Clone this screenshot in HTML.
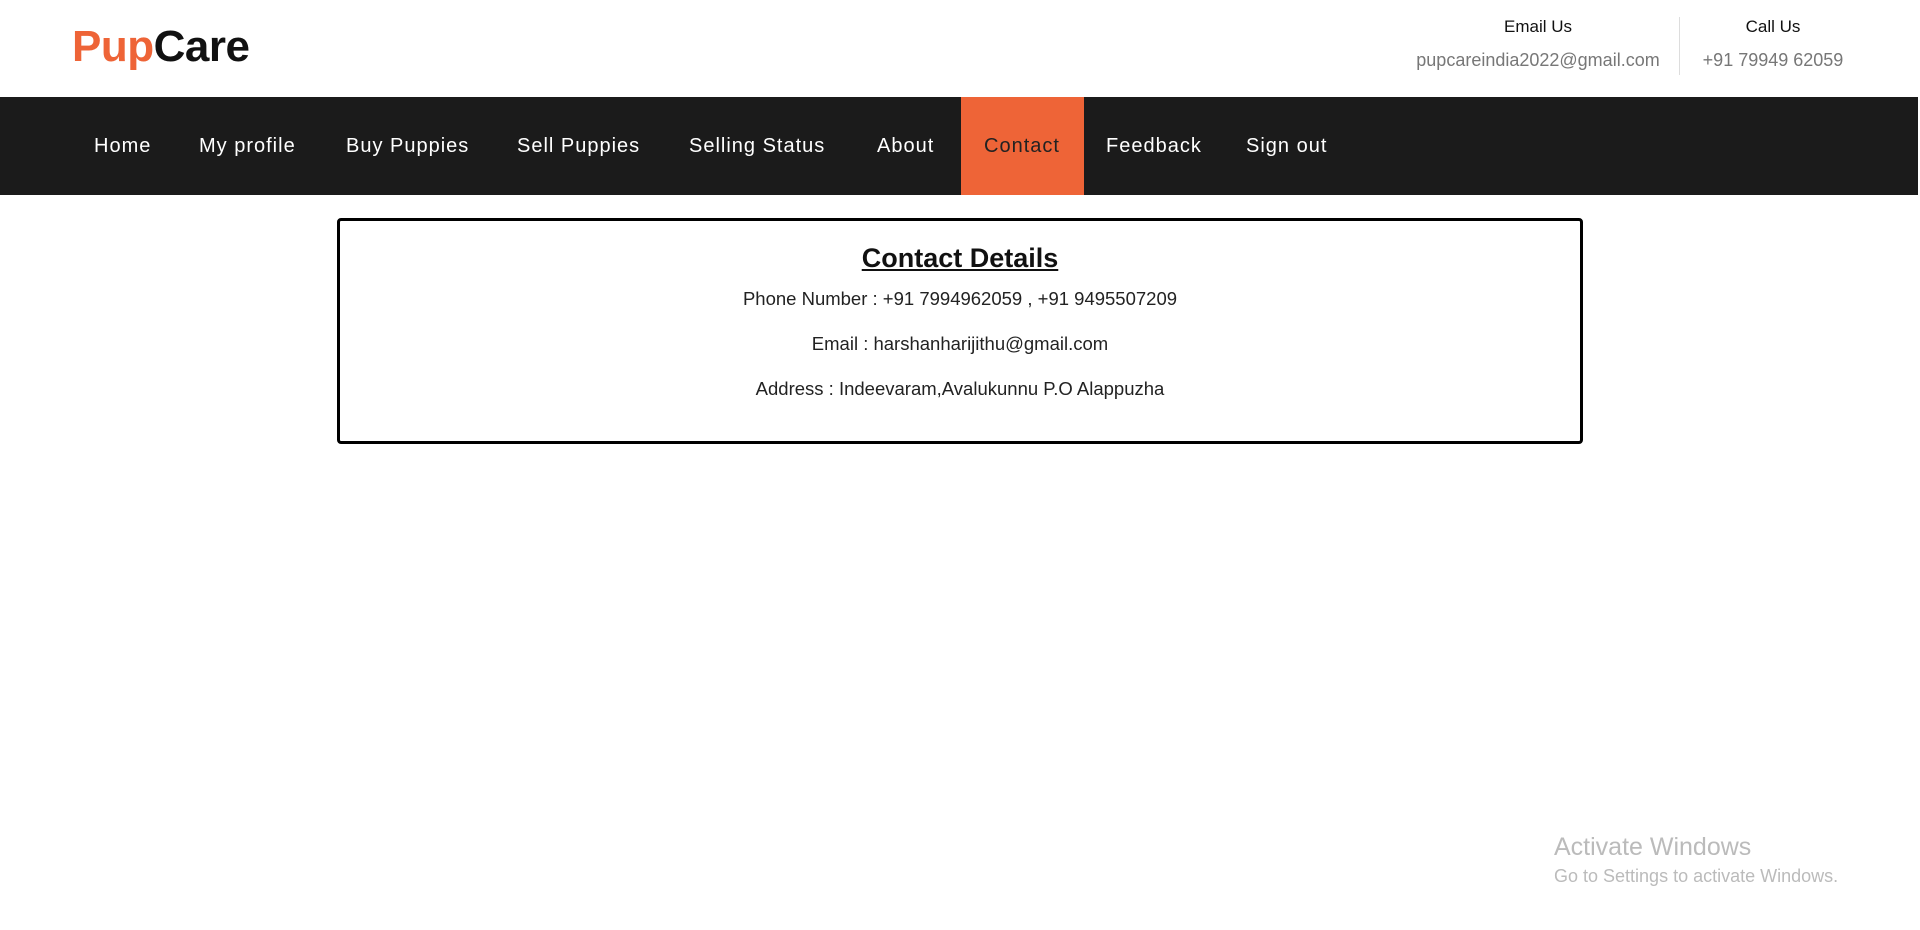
<!DOCTYPE html>
<html><head><meta charset="utf-8"><style>
body{margin:0;width:1920px;height:930px;background:#fff;font-family:"Liberation Sans",sans-serif;position:relative;overflow:hidden}
.a{position:absolute;white-space:nowrap}
.logo{left:72px;top:22px;font-size:44px;font-weight:bold;color:#111;letter-spacing:-0.5px}
.logo span{color:#ee6437}
.nav{position:absolute;left:0;top:97px;width:1918px;height:98px;background:#1b1b1b}
.nav .a{color:#fff;font-size:20px;top:38px;letter-spacing:1px}
.hl{position:absolute;left:961px;top:0;width:123px;height:98px;background:#ee6437}
.box{position:absolute;left:337px;top:218px;width:1240px;height:220px;border:3px solid #000;border-radius:4px}
.c{position:absolute;left:0;width:100%;text-align:center;color:#222;font-size:18.5px}
</style></head><body>
<div class="a logo"><span>Pup</span>Care</div>
<div class="a" style="left:1468px;top:17px;width:140px;text-align:center;font-size:17px;color:#111">Email Us</div>
<div class="a" style="left:1398px;top:50px;width:280px;text-align:center;font-size:18px;color:#777">pupcareindia2022@gmail.com</div>
<div style="position:absolute;left:1679px;top:17px;width:1px;height:58px;background:#ddd"></div>
<div class="a" style="left:1703px;top:17px;width:140px;text-align:center;font-size:17px;color:#111">Call Us</div>
<div class="a" style="left:1683px;top:50px;width:180px;text-align:center;font-size:18px;color:#777">+91 79949 62059</div>
<div class="nav">
<div class="hl"></div>
<div class="a" style="left:94px">Home</div>
<div class="a" style="left:199px">My profile</div>
<div class="a" style="left:346px">Buy Puppies</div>
<div class="a" style="left:517px">Sell Puppies</div>
<div class="a" style="left:689px">Selling Status</div>
<div class="a" style="left:877px">About</div>
<div class="a" style="left:984px;color:#222">Contact</div>
<div class="a" style="left:1106px">Feedback</div>
<div class="a" style="left:1246px">Sign out</div>
</div>
<div class="box">
<div class="c" style="top:22px;font-size:27px;font-weight:bold;text-decoration:underline;color:#111">Contact Details</div>
<div class="c" style="top:67px">Phone Number : +91 7994962059 , +91 9495507209</div>
<div class="c" style="top:112px">Email : harshanharijithu@gmail.com</div>
<div class="c" style="top:157px">Address : Indeevaram,Avalukunnu P.O Alappuzha</div>
</div>
<div class="a" style="left:1554px;top:833px;font-size:25px;color:#bbb">Activate Windows</div>
<div class="a" style="left:1554px;top:866px;font-size:18px;color:#bbb">Go to Settings to activate Windows.</div>
</body></html>
